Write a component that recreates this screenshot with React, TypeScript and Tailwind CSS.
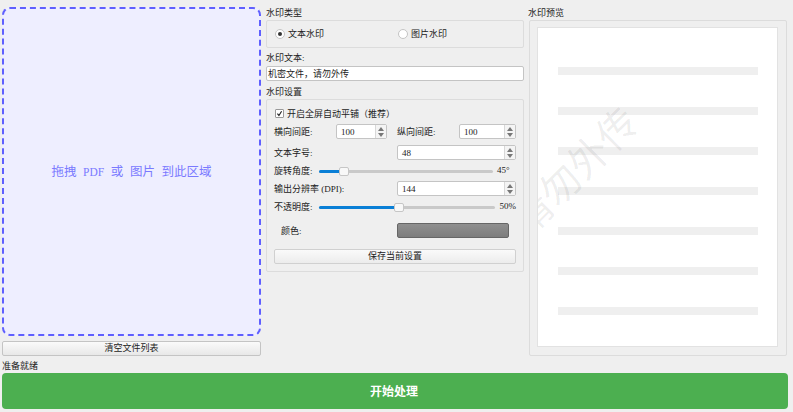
const font = { fontFamily: '"Liberation Serif", "Noto Sans CJK SC", serif' };

function SpinBox({ value, className }: { value: string; className: string }) {
  return (
    <div className={`flex h-[15px] items-stretch rounded-[2px] border border-[#c4c4c4] bg-white ${className}`}>
      <span className="flex-1 pl-[4px] text-[9px] leading-[14px] text-[#222]">{value}</span>
      <div className="flex w-[11px] flex-col items-center justify-center gap-[2px] border-l border-[#d8d8d8] bg-[#f4f4f4]">
        <span className="h-0 w-0 border-x-[3px] border-b-[4px] border-x-transparent border-b-[#777]" />
        <span className="h-0 w-0 border-x-[3px] border-t-[4px] border-x-transparent border-t-[#777]" />
      </div>
    </div>
  );
}

function Slider({ fill, thumb, className }: { fill: string; thumb: string; className: string }) {
  return (
    <div className={`relative h-[3px] rounded-full bg-[#c9c9c9] ${className}`}>
      <div className={`h-full rounded-full bg-[#0a7fd6] ${fill}`} />
      <span className={`absolute top-[-3px] h-[9px] w-[10px] rounded-[2px] border border-[#c6c6c6] bg-[#f8f8f8] ${thumb}`} />
    </div>
  );
}

function Radio({ checked, label, className }: { checked?: boolean; label: string; className: string }) {
  return (
    <div className={`flex items-center gap-[3px] ${className}`}>
      <span className="flex h-[10px] w-[10px] items-center justify-center rounded-full border border-[#c4c4c4] bg-white">
        {checked && <span className="h-[4px] w-[4px] rounded-full bg-[#333]" />}
      </span>
      <span className="text-[9px] leading-[12px] text-[#222]">{label}</span>
    </div>
  );
}

function Label({ children, className = "" }: { children: string; className?: string }) {
  return <div className={`text-[9px] leading-[12px] text-[#222] ${className}`}>{children}</div>;
}

const BARS = [0, 1, 2, 3, 4, 5, 6];

export default function App() {
  return (
    <div style={font} className="flex h-[412px] w-[793px] flex-col bg-[#efefef] px-[2px] pt-[7px]">
      <div className="flex h-[349px]">
        {/* file list */}
        <div className="flex w-[259px] flex-col">
          <div className="flex h-[329px] items-center justify-center rounded-[8px] border-2 border-dashed border-[#5f5fff] bg-[#eeeeff] pt-[2px]">
            <span className="whitespace-pre text-[12.5px] text-[#7a7aff] [word-spacing:3.5px]">
              拖拽 <span className="text-[11.5px]">PDF</span> 或 图片 到此区域
            </span>
          </div>
          <button className="mt-[5px] h-[15px] rounded-[2px] border border-[#c4c4c4] bg-gradient-to-b from-[#fafafa] to-[#e8e8e8] text-[9px] leading-[13px] text-[#222]">
            清空文件列表
          </button>
        </div>

        {/* settings */}
        <div className="ml-[5px] flex w-[258px] flex-col">
          <Label>水印类型</Label>
          <div className="mt-[1px] flex h-[28px] items-center rounded-[2px] border border-[#dcdcdc] pl-[8px]">
            <Radio checked label="文本水印" className="w-[123px]" />
            <Radio label="图片水印" className="" />
          </div>
          <Label className="mt-[4px]">水印文本:</Label>
          <div className="mt-[2px] h-[15px] rounded-[2px] border border-[#c4c4c4] bg-white pl-[1px] text-[9px] leading-[14px] text-[#222]">
            机密文件，请勿外传
          </div>
          <Label className="mt-[5px]">水印设置</Label>
          <div className="mt-[1px] flex h-[173px] flex-col rounded-[2px] border border-[#dcdcdc] px-[7px] pt-[7px]">
            <div className="flex h-[12px] items-center gap-[3px] pl-[1px] pt-[1px]">
              <span className="flex h-[9px] w-[9px] items-center justify-center rounded-[1px] border border-[#999] bg-white">
                <svg viewBox="0 0 10 10" className="h-[9px] w-[9px]">
                  <path d="M2 5.2 L4.2 7.8 L8 1.8" fill="none" stroke="#222" strokeWidth="1.6" />
                </svg>
              </span>
              <span className="text-[9px] leading-[12px] text-[#222]">开启全屏自动平铺（推荐）</span>
            </div>
            <div className="mt-[5px] flex items-center">
              <Label className="w-[62px]">横向间距:</Label>
              <SpinBox value="100" className="w-[51px]" />
              <Label className="ml-[10px] w-[62px]">纵向间距:</Label>
              <SpinBox value="100" className="w-[57px]" />
            </div>
            <div className="mt-[6px] flex items-center">
              <Label className="w-[123px]">文本字号:</Label>
              <SpinBox value="48" className="w-[119px]" />
            </div>
            <div className="mt-[4px] flex h-[14px] items-center">
              <Label className="w-[45px]">旋转角度:</Label>
              <Slider fill="w-[22px]" thumb="left-[20px]" className="w-[174px]" />
              <span className="ml-[4px] text-[9px] text-[#222]">45°</span>
            </div>
            <div className="mt-[3px] flex items-center">
              <Label className="w-[123px]">输出分辨率 (DPI):</Label>
              <SpinBox value="144" className="w-[119px]" />
            </div>
            <div className="mt-[4px] flex h-[14px] items-center">
              <Label className="w-[45px]">不透明度:</Label>
              <Slider fill="w-[78px]" thumb="left-[75px]" className="w-[178px]" />
              <span className="ml-[5px] text-[9px] text-[#222]">50%</span>
            </div>
            <div className="mt-[9px] flex items-center">
              <Label className="ml-[7px] w-[116px]">颜色:</Label>
              <div className="h-[15px] w-[112px] rounded-[2px] border border-[#666] bg-gradient-to-b from-[#8f8f8f] to-[#7d7d7d]" />
            </div>
            <button className="mt-[11px] h-[15px] rounded-[2px] border border-[#d0d0d0] bg-gradient-to-b from-[#fafafa] to-[#ececec] text-[9px] leading-[13px] text-[#222]">
              保存当前设置
            </button>
          </div>
        </div>

        {/* preview */}
        <div className="ml-[4px] flex w-[259px] flex-col">
          <Label>水印预览</Label>
          <div className="ml-[1px] mt-[1px] flex h-[336px] w-[258px] rounded-[2px] border border-[#dcdcdc] py-[6px] pl-[7px]">
            <div className="relative flex h-[320px] w-[241px] flex-col gap-[32px] overflow-hidden border border-[#e2e2e2] bg-white px-[20px] pt-[39px]">
              {BARS.map((b) => (
                <div key={b} className="h-[8px] w-[200px] shrink-0 bg-[#efefef]" />
              ))}
              <span className="absolute left-[-213px] top-[187px] -rotate-45 whitespace-nowrap text-[40px] leading-[56px] text-[#000]/[0.07]">
                机密文件，请勿外传
              </span>
            </div>
          </div>
        </div>
      </div>

      <Label className="mt-[2px] h-[15px] pt-[2px]">准备就绪</Label>
      <button className="h-[36px] w-[786px] rounded-[4px] bg-[#4caf50] pr-[2px] pt-[2px] text-[12px] font-bold text-white">开始处理</button>
    </div>
  );
}
